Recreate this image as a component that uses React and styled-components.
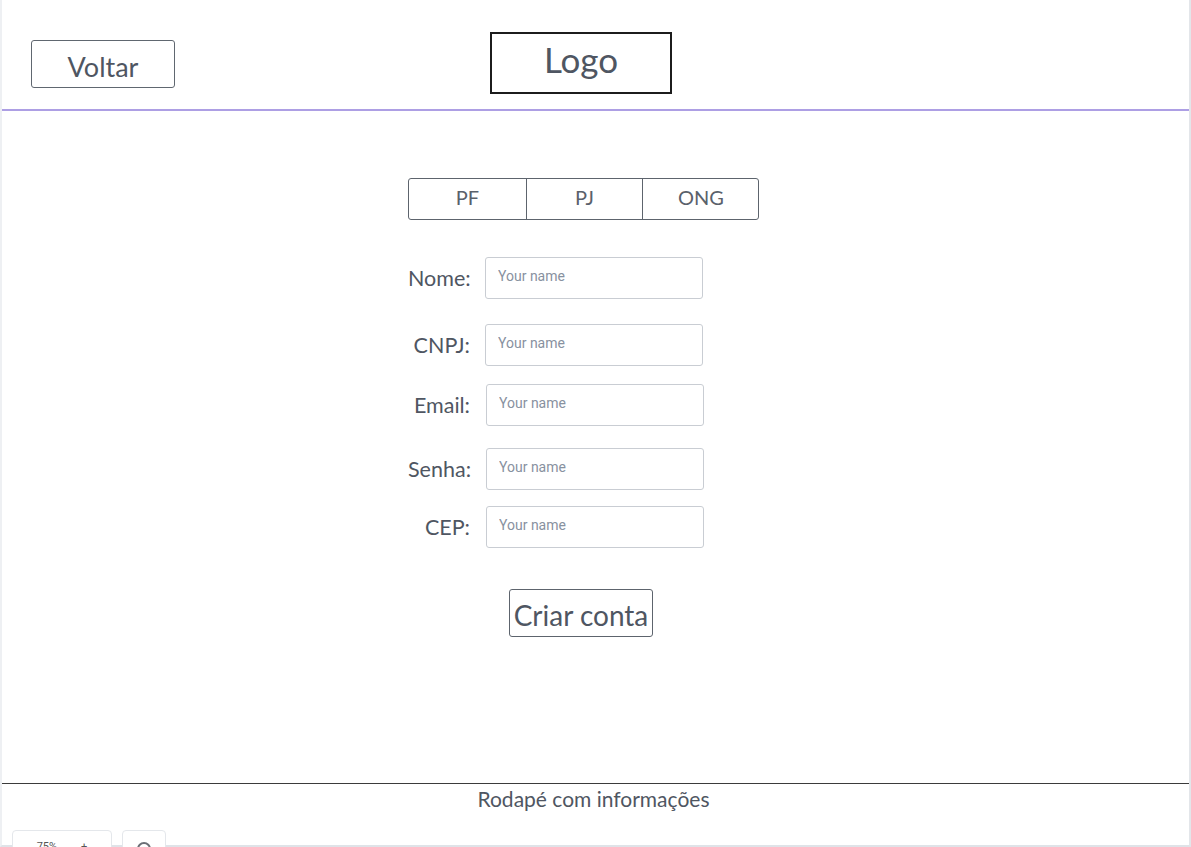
import React from "react";
import styled, { createGlobalStyle } from "styled-components";

const Global = createGlobalStyle`
  html, body { margin: 0; padding: 0; background: #ffffff; }
  body { font-family: Lato, "Open Sans", sans-serif; color: #4f5662; overflow: hidden; }
  * { box-sizing: border-box; }
`;

const Frame = styled.div`
  position: relative;
  width: 1191px;
  height: 847px;
  display: flex;
  flex-direction: column;
  border-left: 2px solid #eef0f3;
  border-right: 2px solid #e3e6ea;
  border-bottom: 2px solid #dfe3e8;
  background: #fff;
`;

const Header = styled.header`
  height: 111px;
  display: flex;
  align-items: flex-start;
  padding-left: 29px;
  border-bottom: 2px solid #ad9fe4;
`;

const BackButton = styled.button`
  margin-top: 40px;
  width: 144px;
  height: 48px;
  border: 1.5px solid #606770;
  border-radius: 3px;
  background: #fff;
  font-family: Lato, sans-serif;
  font-size: 27px;
  color: #4f5662;
  padding: 4px 0 0;
  cursor: pointer;
`;

const LogoBox = styled.div`
  margin-top: 32px;
  margin-left: 315px;
  width: 182px;
  height: 62px;
  border: 2px solid #1c1c1c;
  display: flex;
  align-items: center;
  justify-content: center;
  font-size: 35px;
  color: #4f5662;
  padding-bottom: 8px;
`;

const Main = styled.main`
  flex: 1;
  display: flex;
  flex-direction: column;
  align-items: flex-start;
  padding-left: 406px;
  padding-top: 67px;
`;

const Tabs = styled.div`
  display: grid;
  grid-template-columns: 117px 116px 117px;
  width: 351px;
  height: 42px;
  border: 1.5px solid #5d646d;
  border-radius: 3px;
`;

const Tab = styled.div`
  display: flex;
  align-items: center;
  justify-content: center;
  font-size: 20px;
  color: #5a616b;
  padding-bottom: 4px;
  border-left: ${(p) => (p.$first ? "none" : "1.5px solid #5d646d")};
`;

const Form = styled.div`
  display: flex;
  flex-direction: column;
  margin-top: 37px;
`;

const Row = styled.div`
  display: grid;
  grid-template-columns: 62px ${(p) => p.$shift}px 218px;
  align-items: center;
  margin-top: ${(p) => p.$top}px;
`;

const Label = styled.label`
  grid-column: 1;
  text-align: right;
  font-size: 21.5px;
  color: #4f5662;
  white-space: nowrap;
`;

const Input = styled.input`
  grid-column: 3;
  height: 42px;
  border: 1.5px solid #c9cdd3;
  border-radius: 3px;
  padding: 0 0 4px 12px;
  font-family: Roboto, "Liberation Sans", sans-serif;
  font-size: 14px;
  color: #333;
  background: #fff;
  outline: none;
  &::placeholder { color: #8891a0; }
`;

const SubmitButton = styled.button`
  margin-top: 41px;
  margin-left: 101px;
  width: 144px;
  height: 48px;
  border: 1.5px solid #5d646d;
  border-radius: 3px;
  background: #fff;
  font-family: Lato, sans-serif;
  font-size: 28px;
  color: #4f5662;
  padding: 4px 0 0;
  cursor: pointer;
`;

const Footer = styled.footer`
  height: 62px;
  border-top: 1.5px solid #3b3b3b;
  display: flex;
  justify-content: center;
  padding-top: 2px;
  padding-right: 4px;
  font-size: 21px;
  color: #4f5662;
`;

const Controls = styled.div`
  position: absolute;
  left: 10px;
  top: 830px;
  display: flex;
  gap: 10px;
`;

const Chip = styled.div`
  height: 24px;
  width: ${(p) => p.$w}px;
  border: 1px solid #e4e7eb;
  border-radius: 4px;
  background: #fff;
  display: flex;
  align-items: flex-start;
  justify-content: center;
  gap: 24px;
  padding-top: 9px;
  font-family: Roboto, sans-serif;
  font-size: 11px;
  color: #555;
`;

const HelpDot = styled.span`
  width: 14px;
  height: 14px;
  border-radius: 50%;
  border: 2px solid #6b6f76;
  margin-top: 2px;
`;

const fields = [
  { label: "Nome:", top: 0, shift: 15 },
  { label: "CNPJ:", top: 25, shift: 15 },
  { label: "Email:", top: 18, shift: 16 },
  { label: "Senha:", top: 22, shift: 16 },
  { label: "CEP:", top: 16, shift: 16 },
];

export default function App() {
  return (
    <>
      <Global />
      <Frame>
        <Header>
          <BackButton>Voltar</BackButton>
          <LogoBox>Logo</LogoBox>
        </Header>
        <Main>
          <Tabs>
            <Tab $first>PF</Tab>
            <Tab>PJ</Tab>
            <Tab>ONG</Tab>
          </Tabs>
          <Form>
            {fields.map((f) => (
              <Row key={f.label} $top={f.top} $shift={f.shift}>
                <Label>{f.label}</Label>
                <Input placeholder="Your name" />
              </Row>
            ))}
          </Form>
          <SubmitButton>Criar conta</SubmitButton>
        </Main>
        <Footer>Rodapé com informações</Footer>
        <Controls>
          <Chip $w={100}>
            <span>75%</span>
            <span>+</span>
          </Chip>
          <Chip $w={44}>
            <HelpDot />
          </Chip>
        </Controls>
      </Frame>
    </>
  );
}
